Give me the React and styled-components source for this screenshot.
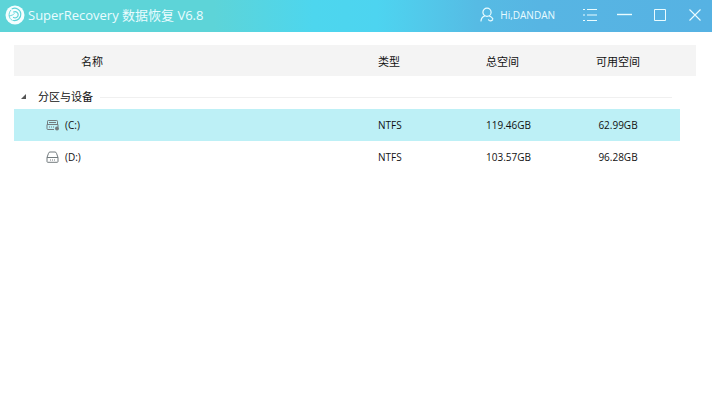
import React, { useState } from "react";
import styled, { createGlobalStyle } from "styled-components";

const GlobalStyle = createGlobalStyle`
  * { box-sizing: border-box; }
  body {
    margin: 0;
    background: #fff;
    color: #111;
    font: 10px/16px "Open Sans", "Noto Sans", "Noto Sans CJK SC", sans-serif;
  }
  button {
    border: 0;
    padding: 0;
    background: none;
    color: inherit;
    font: inherit;
    cursor: pointer;
  }
`;

const TitleBar = styled.header`
  display: flex;
  align-items: center;
  height: 32px;
  padding: 0 0 2px 5px;
  color: #eafcff;
  background: linear-gradient(90deg, #5dd4d8 0%, #5dd4d8 30%, #4dd6ee 44%, #4dd4f0 53%, #52c8ea 60%, #56bbe4 67%, #57b5e3 76%, #56b2e3 100%);
`;

const AppTitle = styled.h1`
  flex: 1;
  margin: 0 0 0 3px;
  font-size: 13px;
  line-height: 20px;
  font-weight: 400;
  white-space: nowrap;
`;

const UserButton = styled.button`
  display: flex;
  align-items: center;
  gap: 6px;
  margin-right: 17px;
`;

const WindowButton = styled.button`
  display: flex;
  align-items: center;
  justify-content: center;
  width: 35px;
  height: 30px;
`;

const Content = styled.main`
  padding: 13px 16px 16px 14px;
`;

const DriveTable = styled.table`
  width: 100%;
  table-layout: fixed;
  border-collapse: collapse;
`;

const Column = styled.col`
  width: ${(p) => p.$width};
`;

const HeadCell = styled.th`
  height: 31px;
  padding: 2px ${(p) => (p.$end ? "16px" : "0")} 0 ${(p) => (p.$name ? "67px" : "0")};
  background: #f4f4f4;
  font-size: 11px;
  font-weight: 400;
  text-align: ${(p) => (p.$end ? "center" : "left")};
`;

const GroupCell = styled.th`
  height: 33px;
  padding: 9px 24px 0 6px;
  font-weight: 400;
`;

const GroupToggle = styled.button`
  display: flex;
  align-items: center;
  width: 100%;
  font-size: 11px;

  svg { margin-right: 11px; }

  &::after {
    content: "";
    flex: 1;
    height: 1px;
    margin-left: 7px;
    background: #f0f0f0;
  }
`;

const Cell = styled.td`
  height: 32px;
  padding: 0 ${(p) => (p.$end ? "16px" : "0")} 1px 0;
  background: ${(p) => (p.$selected ? "#bdf0f6" : "transparent")};
  text-align: ${(p) => (p.$end ? "center" : "left")};
`;

const DriveButton = styled.button`
  display: flex;
  align-items: center;
  gap: 5px;
  width: 100%;
  padding-left: 32px;
`;

const Logo = () => (
  <svg width="20" height="20" viewBox="0 0 20 20" fill="none" stroke="#5dd4d8" strokeLinecap="round" aria-hidden="true">
    <circle cx="10" cy="10" r="9.5" fill="#f4feff" stroke="none" />
    <path d="M7.200 3.800C10.500 2.300 15.400 4 15.800 8.800c.3 4.300-3.300 7.400-7.300 6.700" strokeWidth="1.200" />
    <path d="M8.600 7c2.500-1.100 4.800.6 4.600 3-.2 2.300-2.700 3.500-4.700 2.500" strokeWidth="1.200" />
    <path d="M5.800 5.200C3 8.500 3.500 13.500 7.200 15.300" strokeWidth=".9" />
    <path d="M4.500 10.800c2.200-.2 3.600-.9 4.900-2.300" strokeWidth=".9" />
  </svg>
);

const UserIcon = () => (
  <svg width="14" height="16" viewBox="0 0 14 16" fill="none" stroke="currentColor" strokeWidth="1.2" strokeLinecap="round" aria-hidden="true">
    <circle cx="7" cy="5.2" r="4.1" />
    <path d="M4.6 9C2.5 9.8 1.2 11.6 1 14M9.4 9c1.5.6 2.7 1.5 3.4 2.8M8.5 12.8c.9 1.6 2.6 1.5 4.2 0" />
  </svg>
);

const ListIcon = () => (
  <svg width="14" height="14" viewBox="0 0 14 14" stroke="currentColor" strokeWidth="1.2" aria-hidden="true">
    <path d="M0 1.5h2M4 1.5h10M0 7h2M4 7h10M0 12.5h2M4 12.5h10" />
  </svg>
);

const MinimizeIcon = () => (
  <svg width="15" height="14" viewBox="0 0 15 14" stroke="currentColor" strokeWidth="1.4" aria-hidden="true">
    <path d="M0 6.5h15" />
  </svg>
);

const MaximizeIcon = () => (
  <svg width="12" height="12" viewBox="0 0 12 12" fill="none" stroke="currentColor" aria-hidden="true">
    <path d="M.5.5h11v11H.5z" />
  </svg>
);

const CloseIcon = () => (
  <svg width="12" height="12" viewBox="0 0 12 12" stroke="currentColor" strokeWidth="1.1" aria-hidden="true">
    <path d="M.5.5l11 11M11.5.5l-11 11" />
  </svg>
);

const ToggleIcon = ({ open }) => (
  <svg width="7" height="7" viewBox="0 0 7 7" fill="#555" aria-hidden="true">
    <path d={open ? "M6 0v5H1z" : "M2 1l4 3-4 3z"} />
  </svg>
);

const DriveIcon = ({ system }) => (
  <svg width="14" height="12" viewBox="0 0 14 12" fill="none" stroke="#737b7e" aria-hidden="true">
    {system ? (
      <>
        <path d="M1.500 5.500V2.300Q1.500 1.500 2.300 1.500h8.400q.8 0 .8.8v3.200M1 5.500h11V8M1 5.500v4.200q0 .8.8.8H8M3 8h1M5 8h1M7 8h1M3 3.500h7" />
        <circle cx="11" cy="9.5" r="2" fill="#737b7e" stroke="none" />
      </>
    ) : (
      <path d="M1 6.5l1.5-4.2Q2.9 1 4 1h5q1.1 0 1.5 1.3L12 6.5v4q0 .8-.8.8H1.8q-.8 0-.8-.8zM1 6.5h11M4 9h1M6 9h1M8 9h1" />
    )}
  </svg>
);

const drives = [
  { name: "(C:)", type: "NTFS", total: "119.46GB", free: "62.99GB", system: true },
  { name: "(D:)", type: "NTFS", total: "103.57GB", free: "96.28GB", system: false },
];

export default function App() {
  const [selected, setSelected] = useState("(C:)");
  const [open, setOpen] = useState(true);

  return (
    <>
      <GlobalStyle />
      <TitleBar>
        <Logo />
        <AppTitle>SuperRecovery 数据恢复 V6.8</AppTitle>
        <UserButton>
          <UserIcon />
          Hi,DANDAN
        </UserButton>
        <WindowButton aria-label="菜单"><ListIcon /></WindowButton>
        <WindowButton aria-label="最小化"><MinimizeIcon /></WindowButton>
        <WindowButton aria-label="最大化"><MaximizeIcon /></WindowButton>
        <WindowButton aria-label="关闭"><CloseIcon /></WindowButton>
      </TitleBar>
      <Content>
        <DriveTable>
          <colgroup>
            <Column $width="auto" />
            <Column $width="108px" />
            <Column $width="86px" />
            <Column $width="108px" />
            <Column $width="16px" />
          </colgroup>
          <thead>
            <tr>
              <HeadCell $name>名称</HeadCell>
              <HeadCell>类型</HeadCell>
              <HeadCell>总空间</HeadCell>
              <HeadCell $end>可用空间</HeadCell>
              <HeadCell as="td" />
            </tr>
          </thead>
          <tbody>
            <tr>
              <GroupCell colSpan={5} scope="rowgroup">
                <GroupToggle aria-expanded={open} onClick={() => setOpen(!open)}>
                  <ToggleIcon open={open} />
                  分区与设备
                </GroupToggle>
              </GroupCell>
            </tr>
            {open && drives.map((d) => {
              const active = d.name === selected;
              return (
                <tr key={d.name}>
                  <Cell $selected={active}>
                    <DriveButton aria-pressed={active} onClick={() => setSelected(d.name)}>
                      <DriveIcon system={d.system} />
                      {d.name}
                    </DriveButton>
                  </Cell>
                  <Cell $selected={active}>{d.type}</Cell>
                  <Cell $selected={active}>{d.total}</Cell>
                  <Cell $selected={active} $end>{d.free}</Cell>
                  <Cell />
                </tr>
              );
            })}
          </tbody>
        </DriveTable>
      </Content>
    </>
  );
}
